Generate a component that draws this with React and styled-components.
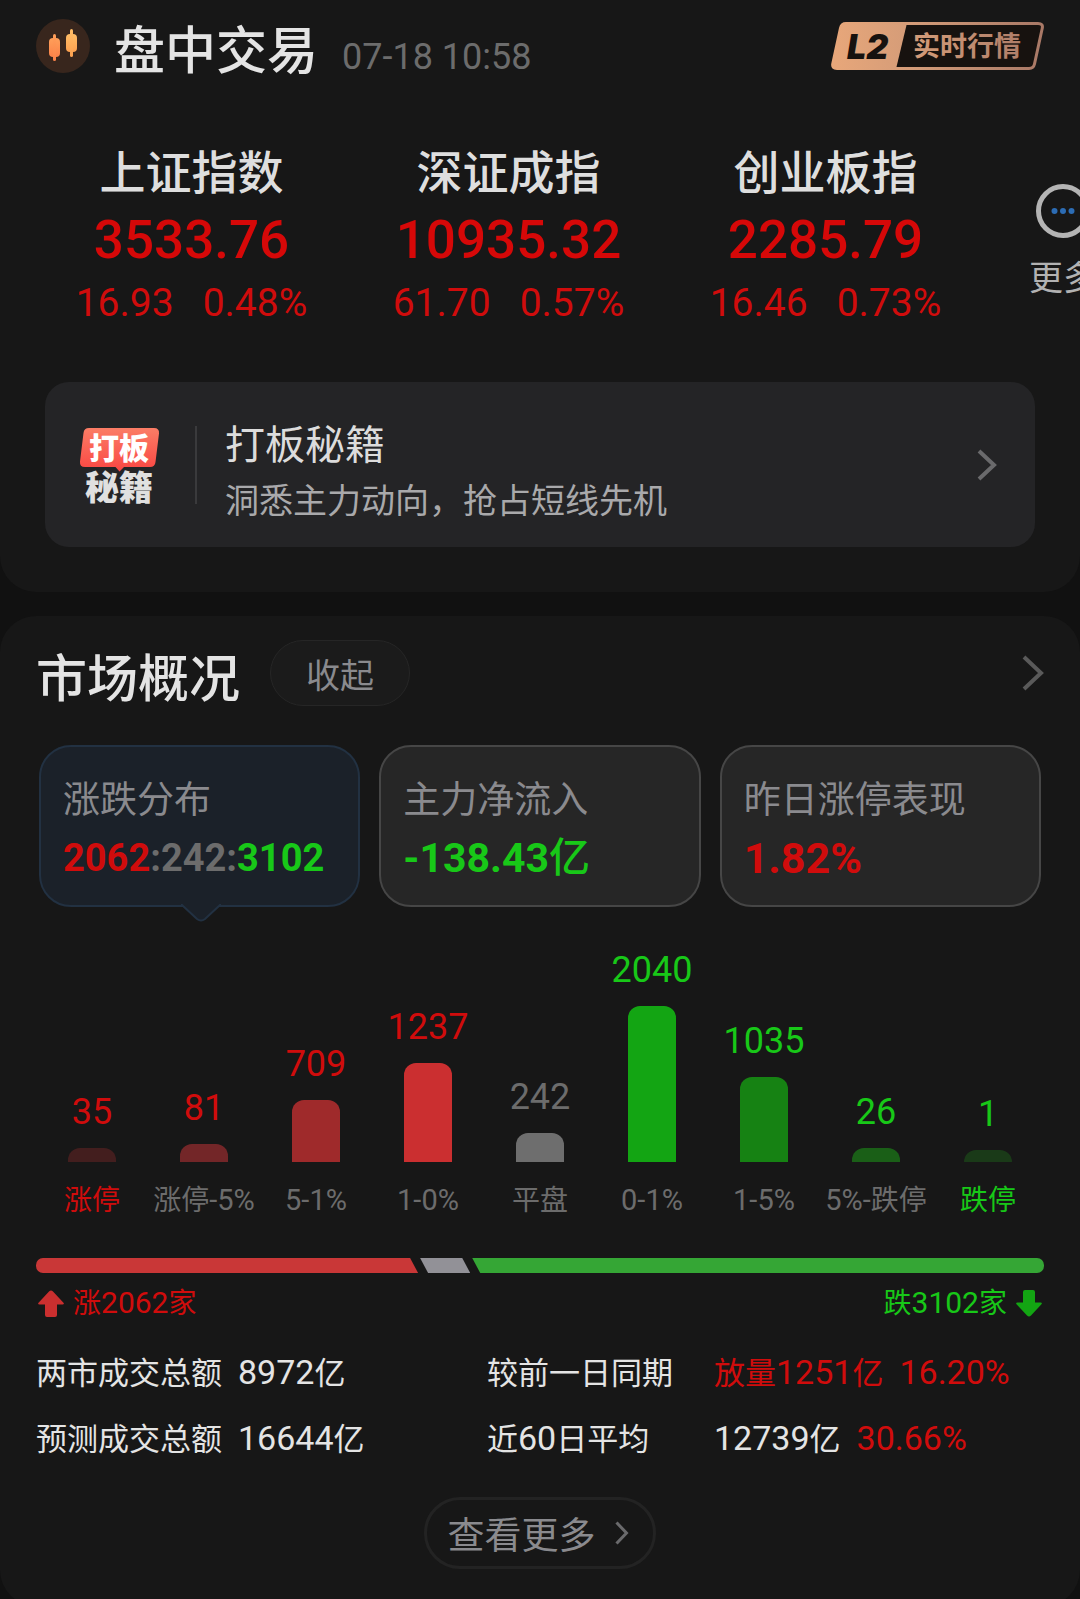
import React, { useState } from "react";
import styled, { createGlobalStyle, css } from "styled-components";

const color = {
  page: "#111111",
  panel: "#171717",
  text: "#e4e4e4",
  soft: "#b2b2b2",
  muted: "#8a8a8e",
  dim: "#6c6c6c",
  up: "#d00c0c",
  down: "#18c818",
};

const GlobalStyle = createGlobalStyle`
  *, *::before, *::after { box-sizing: border-box; }
  body {
    margin: 0;
    background: ${color.page};
    color: ${color.text};
    font-family: Roboto, "Noto Sans CJK SC", sans-serif;
  }
  h1, h2, h3, p, dl, dt, dd, ul { margin: 0; padding: 0; font-weight: 400; }
  ul { list-style: none; }
  button { font: inherit; color: inherit; background: none; border: 0; padding: 0; cursor: pointer; }
  a { color: inherit; text-decoration: none; }
`;

const toneColor = ({ $tone }) => color[$tone] || color.text;

const Page = styled.main`
  height: 100vh;
  overflow-x: hidden;
  overflow-y: auto;
  scrollbar-width: none;
  display: flex;
  flex-direction: column;
  gap: 24px;
`;

const Panel = styled.section`
  flex: none;
  background: ${color.panel};
  border-radius: ${({ $first }) => ($first ? "0 0 36px 36px" : "36px")};
  padding: ${({ $first }) => ($first ? "19px 0 45px" : "24px 36px 37px")};
`;

const Header = styled.header`
  display: flex;
  align-items: center;
  justify-content: space-between;
  height: 54px;
  padding: 0 36px;
`;

const Row = styled.div`
  display: flex;
  align-items: center;
  gap: ${({ $gap }) => $gap}px;
`;

const TitleLine = styled.div`
  display: flex;
  align-items: baseline;
  gap: 24px;
  padding-top: 16px;
  line-height: 44px;
  white-space: nowrap;
`;

const Title = styled.h1`
  font-size: 51px;
  font-weight: 500;
`;

const Stamp = styled.time`
  font-size: 36px;
  color: ${color.dim};
`;

const Indices = styled.ul`
  display: flex;
  padding: 68px 0 0 33px;
  overflow: hidden;
`;

const IndexItem = styled.li`
  flex: 0 0 317px;
  display: flex;
  flex-direction: column;
  align-items: center;
  white-space: nowrap;
`;

const IndexName = styled.h2`
  font-size: 46px;
  line-height: 64px;
  font-weight: 500;
  color: #dedede;
`;

const IndexValue = styled.strong`
  font-size: 53px;
  line-height: 70px;
  font-weight: 500;
  color: #d60808;
`;

const IndexChange = styled.div`
  display: flex;
  gap: 29px;
  font-size: 39px;
  line-height: 56px;
  color: ${color.up};
`;

const MoreItem = styled.li`
  flex: none;
  padding: 43px 0 0 45px;
`;

const MoreButton = styled.button`
  display: flex;
  flex-direction: column;
  align-items: center;
  gap: 15px;
  font-size: 34px;
  line-height: 50px;
  color: ${color.soft};
  white-space: nowrap;
`;

const Promo = styled.a`
  display: flex;
  align-items: center;
  height: 165px;
  margin: 51px 45px 0;
  padding: 0 38px 0 35px;
  border-radius: 24px;
  background: #242426;
`;

const Divider = styled.span`
  width: 2px;
  height: 78px;
  margin: 0 28px 0 36px;
  background: #3a3a3c;
`;

const PromoText = styled.div`
  flex: 1;
  padding-top: 16px;
  line-height: 56px;
`;

const PromoTitle = styled.h2`
  font-size: 40px;
  color: #dcdcdc;
`;

const PromoNote = styled.p`
  font-size: 34px;
  line-height: 54px;
  color: #a9a9ab;
`;

const SectionHead = styled.div`
  display: flex;
  align-items: center;
  justify-content: space-between;
  height: 66px;
`;

const SectionTitle = styled.h2`
  padding-top: 14px;
  font-size: 51px;
  line-height: 54px;
  font-weight: 500;
`;

const FoldButton = styled.button`
  width: 140px;
  height: 66px;
  border: 1px solid #262626;
  border-radius: 33px;
  background: #1b1b1b;
  font-size: 34px;
  color: ${color.muted};
`;

const IconLink = styled.a`
  display: flex;
`;

const Tabs = styled.div`
  display: grid;
  grid-template-columns: repeat(3, 1fr);
  gap: 19px;
  margin: 39px 3px 0;
`;

const Tab = styled.button`
  position: relative;
  height: 162px;
  padding: 26px 22px 18px;
  border: 2px solid #464646;
  border-radius: 32px;
  background: #262626;
  text-align: left;
  white-space: nowrap;
  ${({ $active }) =>
    $active &&
    css`
      border-color: #223142;
      background: #1b2129;
    `}
`;

const TabLabel = styled.span`
  display: block;
  font-size: 37px;
  line-height: 56px;
  color: ${color.muted};
`;

const TabValue = styled.span`
  display: block;
  font-size: ${({ $size }) => $size}px;
  line-height: 58px;
  font-weight: 700;
  color: ${toneColor};
`;

const Unit = styled.span`
  font-weight: 500;
`;

const Tone = styled.span`
  color: ${toneColor};
`;

const Pointer = styled.svg`
  position: absolute;
  top: calc(100% - 1px);
  left: calc(50% - 19px);
`;

const Chart = styled.ul`
  display: grid;
  grid-template-columns: repeat(9, 1fr);
  align-items: end;
  margin-top: 41px;
`;

const Column = styled.li`
  display: flex;
  flex-direction: column;
  align-items: center;
  white-space: nowrap;
`;

const Count = styled.span`
  font-size: 36px;
  line-height: 44px;
  color: ${toneColor};
`;

const Bar = styled.span`
  width: 48px;
  margin: 14px 0 18px;
  border-radius: 12px 12px 0 0;
  background: ${({ $fill }) => $fill};
`;

const Label = styled.span`
  font-size: 29px;
  line-height: 40px;
  color: ${toneColor};
`;

const Han = styled.span`
  font-size: ${({ $size }) => $size}px;
  line-height: 1;
`;

const Ratio = styled.div`
  display: flex;
  gap: 2px;
  height: 15px;
  margin-top: 38px;
  border-radius: 7px;
  overflow: hidden;
`;

const slant = {
  up: "polygon(0 0, calc(100% - 8px) 0, 100% 100%, 0 100%)",
  flat: "polygon(0 0, calc(100% - 8px) 0, 100% 100%, 8px 100%)",
  down: "polygon(0 0, 100% 0, 100% 100%, 8px 100%)",
};

const ratioFill = { up: "#c93737", flat: "#929197", down: "#35a635" };

const Share = styled.span`
  flex: ${({ $count }) => $count} 0 6px;
  background: ${({ $kind }) => ratioFill[$kind]};
  clip-path: ${({ $kind }) => slant[$kind]};
`;

const Totals = styled.div`
  display: flex;
  justify-content: space-between;
  margin-top: 10px;
  padding: 0 2px;
`;

const Total = styled.p`
  display: flex;
  align-items: center;
  gap: 9px;
  font-size: 30px;
  line-height: 40px;
  color: ${toneColor};
`;

const Stats = styled.dl`
  display: grid;
  grid-template-columns: 202fr 249fr 227fr 330fr;
  margin-top: 16px;
  font-size: 34px;
  line-height: 66px;
  white-space: nowrap;
`;

const StatValue = styled.dd`
  display: flex;
  gap: 16px;
`;

const AllButton = styled.button`
  display: flex;
  align-items: center;
  justify-content: center;
  gap: 18px;
  width: 232px;
  height: 72px;
  margin: 26px auto 0;
  padding-right: 4px;
  border: 3px solid #232323;
  border-radius: 36px;
  font-size: 37px;
  line-height: 58px;
  color: ${color.muted};
`;

const AllText = styled.span`
  padding-top: 8px;
`;

function Mixed({ text, han }) {
  return text
    .split(/([\u4e00-\u9fff]+)/)
    .filter(Boolean)
    .map((part, i) =>
      /[\u4e00-\u9fff]/.test(part) ? (
        <Han key={i} $size={han}>
          {part}
        </Han>
      ) : (
        part
      )
    );
}

function Chevron({ width, height, stroke, weight }) {
  const inset = weight / 2 + 1;
  return (
    <svg width={width} height={height} viewBox={`0 0 ${width} ${height}`} fill="none" aria-hidden="true">
      <path
        d={`M${inset} ${inset} L${width - inset} ${height / 2} L${inset} ${height - inset}`}
        stroke={stroke}
        strokeWidth={weight}
      />
    </svg>
  );
}

function CandleIcon() {
  return (
    <svg width="54" height="54" viewBox="0 0 54 54" aria-hidden="true">
      <defs>
        <linearGradient id="candleLeft" x1="0" y1="0" x2="0" y2="1">
          <stop offset="0" stopColor="#ffa05a" />
          <stop offset="1" stopColor="#fb8148" />
        </linearGradient>
        <linearGradient id="candleRight" x1="0" y1="0" x2="0" y2="1">
          <stop offset="0" stopColor="#ffbd66" />
          <stop offset="1" stopColor="#fca050" />
        </linearGradient>
      </defs>
      <circle cx="27" cy="27" r="27" fill="#38261d" />
      <g fill="url(#candleLeft)">
        <rect x="13" y="19" width="11" height="19" rx="4" />
        <rect x="17" y="15" width="3" height="27" rx="1.500" />
      </g>
      <g fill="url(#candleRight)">
        <rect x="30" y="15" width="11" height="18" rx="4" />
        <rect x="34" y="10" width="3" height="28" rx="1.500" />
      </g>
    </svg>
  );
}

function LevelBadge() {
  return (
    <svg width="213" height="48" viewBox="0 0 213 48" role="img" aria-label="L2 实时行情">
      <defs>
        <linearGradient id="copper" gradientUnits="userSpaceOnUse" x1="0" y1="0" x2="213" y2="0">
          <stop offset="0" stopColor="#e8a77a" />
          <stop offset="0.4" stopColor="#d39b78" />
          <stop offset="1" stopColor="#a87866" />
        </linearGradient>
      </defs>
      <path
        d="M15 1.500 H207 Q212.500 1.500 211.200 6.500 L203.500 42 Q202.500 46.500 198 46.500 H6 Q0.800 46.500 1.800 41.500 L9.500 6 Q10.500 1.500 15 1.500 Z"
        fill="#17120f"
        stroke="url(#copper)"
        strokeWidth="3"
      />
      <path
        d="M15 1 H76 L65 47 H6 Q0.500 47 1.500 41.500 L9.500 5.500 Q10.500 1 15 1 Z"
        fill="url(#copper)"
      />
      <text x="16" y="37" fontFamily="Inter, sans-serif" fontSize="34" fontWeight="900" fontStyle="italic" fill="#17120f">
        L2
      </text>
      <text x="82" y="34" fontFamily='"Noto Sans CJK SC", sans-serif' fontSize="27" fontWeight="700" fill="url(#copper)">
        实时行情
      </text>
    </svg>
  );
}

function PromoLogo() {
  return (
    <svg width="79" height="74" viewBox="0 0 79 74" overflow="visible" role="img" aria-label="打板秘籍">
      <defs>
        <linearGradient id="bubble" x1="0" y1="0" x2="0" y2="1">
          <stop offset="0" stopColor="#fb7d66" />
          <stop offset="1" stopColor="#fa4642" />
        </linearGradient>
      </defs>
      <path
        d="M9 0 H74 Q79.500 0 79 5.500 L75.500 34 Q75 39 70 39 H44 L39.500 43.500 L35.500 39 H5 Q-0.500 39 0 33.500 L3.500 5 Q4 0 9 0 Z"
        fill="url(#bubble)"
      />
      <g fontFamily='"Noto Sans CJK SC", sans-serif' fontWeight="900">
        <text x="9" y="31" fontSize="30" fill="#ffffff">
          打板
        </text>
        <text x="5" y="72" fontSize="34" fill="#e0e0e0">
          秘籍
        </text>
      </g>
    </svg>
  );
}

function MoreIcon() {
  return (
    <svg width="54" height="54" viewBox="0 0 54 54" aria-hidden="true">
      <circle cx="27" cy="27" r="24.500" fill="none" stroke="#b4b4b4" strokeWidth="5" />
      <g fill="#2c6cb4">
        <circle cx="18.500" cy="27" r="3" />
        <circle cx="27" cy="27" r="3" />
        <circle cx="35.500" cy="27" r="3" />
      </g>
    </svg>
  );
}

function Arrow({ down }) {
  return (
    <svg width="26" height="27" viewBox="0 0 26 27" aria-hidden="true">
      <path
        d={
          down
            ? "M9 0 H17 Q19 0 19 2 V12.500 H24.500 Q27 12.500 25 14.700 L15 25.500 Q13 27.500 11 25.500 L1 14.700 Q-1 12.500 1.500 12.500 H7 V2 Q7 0 9 0 Z"
            : "M9 27 H17 Q19 27 19 25 V14.500 H24.500 Q27 14.500 25 12.300 L15 1.500 Q13 -0.500 11 1.500 L1 12.300 Q-1 14.500 1.500 14.500 H7 V25 Q7 27 9 27 Z"
        }
        fill={down ? "#13a513" : "#cb2f2f"}
      />
    </svg>
  );
}

const indices = [
  { name: "上证指数", value: "3533.76", diff: "16.93", rate: "0.48%" },
  { name: "深证成指", value: "10935.32", diff: "61.70", rate: "0.57%" },
  { name: "创业板指", value: "2285.79", diff: "16.46", rate: "0.73%" },
];

const spread = [
  { label: "涨停", count: 35, height: 14, fill: "#431e1e", tone: "up", labelTone: "up" },
  { label: "涨停-5%", count: 81, height: 18, fill: "#732628", tone: "up", labelTone: "dim" },
  { label: "5-1%", count: 709, height: 62, fill: "#9f2a2b", tone: "up", labelTone: "dim" },
  { label: "1-0%", count: 1237, height: 99, fill: "#cb2f30", tone: "up", labelTone: "dim" },
  { label: "平盘", count: 242, height: 29, fill: "#6e6e6e", tone: "dim", labelTone: "dim" },
  { label: "0-1%", count: 2040, height: 156, fill: "#13a513", tone: "down", labelTone: "dim" },
  { label: "1-5%", count: 1035, height: 85, fill: "#168213", tone: "down", labelTone: "dim" },
  { label: "5%-跌停", count: 26, height: 14, fill: "#1a5f17", tone: "down", labelTone: "dim" },
  { label: "跌停", count: 1, height: 12, fill: "#1a3a18", tone: "down", labelTone: "down" },
];

export default function App() {
  const [tab, setTab] = useState(0);

  const tabs = [
    {
      label: "涨跌分布",
      size: 38,
      value: (
        <>
          <Tone $tone="up">2062</Tone>
          <Tone $tone="dim">:242:</Tone>
          <Tone $tone="down">3102</Tone>
        </>
      ),
    },
    {
      label: "主力净流入",
      size: 41,
      tone: "down",
      value: (
        <>
          -138.43<Unit>亿</Unit>
        </>
      ),
    },
    { label: "昨日涨停表现", size: 43, tone: "up", value: "1.82%" },
  ];

  return (
    <>
      <GlobalStyle />
      <Page lang="zh-CN">
        <Panel $first>
          <Header>
            <Row $gap={24}>
              <CandleIcon />
              <TitleLine>
                <Title>盘中交易</Title>
                <Stamp>07-18 10:58</Stamp>
              </TitleLine>
            </Row>
            <IconLink href="#level2">
              <LevelBadge />
            </IconLink>
          </Header>

          <Indices>
            {indices.map((item) => (
              <IndexItem key={item.name}>
                <IndexName>{item.name}</IndexName>
                <IndexValue>{item.value}</IndexValue>
                <IndexChange>
                  <span>{item.diff}</span>
                  <span>{item.rate}</span>
                </IndexChange>
              </IndexItem>
            ))}
            <MoreItem>
              <MoreButton type="button">
                <MoreIcon />
                更多
              </MoreButton>
            </MoreItem>
          </Indices>

          <Promo href="#guide">
            <PromoLogo />
            <Divider />
            <PromoText>
              <PromoTitle>打板秘籍</PromoTitle>
              <PromoNote>洞悉主力动向，抢占短线先机</PromoNote>
            </PromoText>
            <Chevron width={21} height={34} stroke="#6a6a6c" weight={4} />
          </Promo>
        </Panel>

        <Panel>
          <SectionHead>
            <Row $gap={30}>
              <SectionTitle>市场概况</SectionTitle>
              <FoldButton type="button">收起</FoldButton>
            </Row>
            <IconLink href="#market" aria-label="市场概况">
              <Chevron width={23} height={38} stroke="#5a5a5a" weight={4} />
            </IconLink>
          </SectionHead>

          <Tabs role="tablist">
            {tabs.map((item, i) => (
              <Tab
                key={item.label}
                type="button"
                role="tab"
                aria-selected={tab === i}
                $active={tab === i}
                onClick={() => setTab(i)}
              >
                <TabLabel>{item.label}</TabLabel>
                <TabValue $size={item.size} $tone={item.tone}>
                  {item.value}
                </TabValue>
                {tab === i && (
                  <Pointer width="40" height="18" viewBox="0 0 40 18" aria-hidden="true">
                    <path d="M0 0 L16 15 Q20 18.500 24 15 L40 0 Z" fill="#1b2129" />
                    <path d="M0 1 H1 L16 15 Q20 18 24 15 L39 1 H40" fill="none" stroke="#223142" strokeWidth="2" />
                  </Pointer>
                )}
              </Tab>
            ))}
          </Tabs>

          <Chart>
            {spread.map((item) => (
              <Column key={item.label}>
                <Count $tone={item.tone}>{item.count}</Count>
                <Bar $fill={item.fill} style={{ height: item.height }} />
                <Label $tone={item.labelTone}>
                  <Mixed text={item.label} han={28} />
                </Label>
              </Column>
            ))}
          </Chart>

          <Ratio>
            <Share $kind="up" $count={2062} />
            <Share $kind="flat" $count={242} />
            <Share $kind="down" $count={3102} />
          </Ratio>
          <Totals>
            <Total $tone="up">
              <Arrow />
              <span>
                <Mixed text="涨2062家" han={28} />
              </span>
            </Total>
            <Total $tone="down">
              <span>
                <Mixed text="跌3102家" han={28} />
              </span>
              <Arrow down />
            </Total>
          </Totals>

          <Stats>
            <dt>
              <Mixed text="两市成交总额" han={31} />
            </dt>
            <StatValue>
              <span>
                <Mixed text="8972亿" han={31} />
              </span>
            </StatValue>
            <dt>
              <Mixed text="较前一日同期" han={31} />
            </dt>
            <StatValue>
              <Tone $tone="up">
                <Mixed text="放量1251亿" han={31} />
              </Tone>
              <Tone $tone="up">16.20%</Tone>
            </StatValue>
            <dt>
              <Mixed text="预测成交总额" han={31} />
            </dt>
            <StatValue>
              <span>
                <Mixed text="16644亿" han={31} />
              </span>
            </StatValue>
            <dt>
              <Mixed text="近60日平均" han={31} />
            </dt>
            <StatValue>
              <span>
                <Mixed text="12739亿" han={31} />
              </span>
              <Tone $tone="up">30.66%</Tone>
            </StatValue>
          </Stats>

          <AllButton type="button">
            <AllText>查看更多</AllText>
            <Chevron width={15} height={26} stroke="#6a6a6c" weight={3} />
          </AllButton>
        </Panel>
      </Page>
    </>
  );
}
